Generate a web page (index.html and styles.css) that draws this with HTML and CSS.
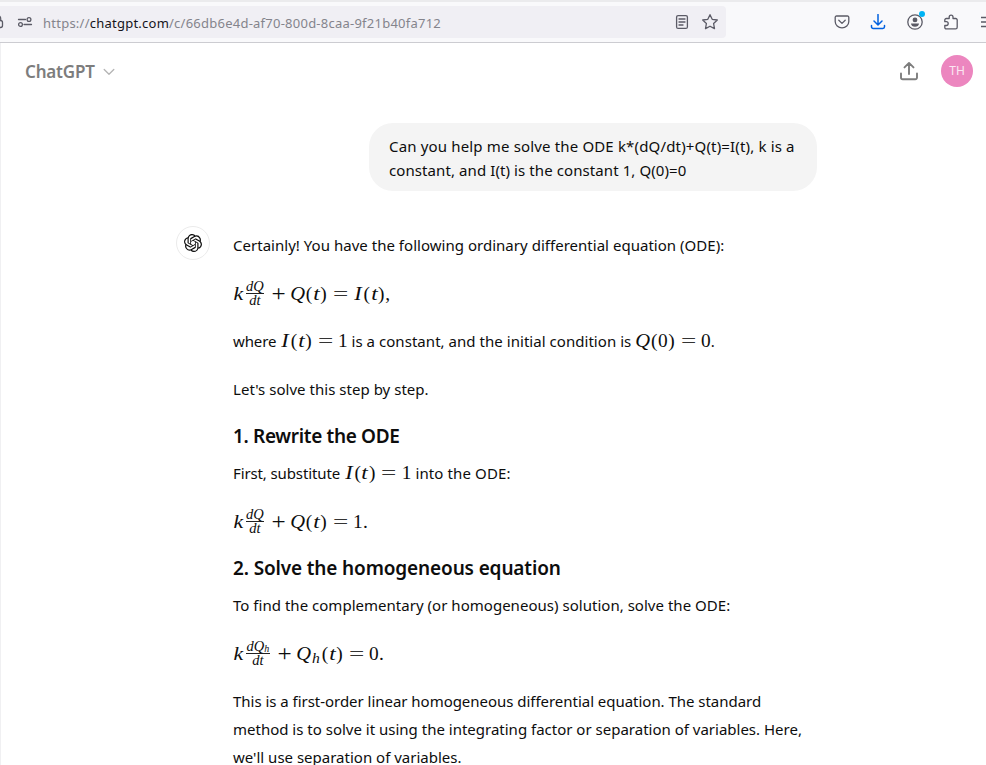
FILE: index.html
```
<!DOCTYPE html>
<html lang="en">
<head>
<meta charset="utf-8">
<title>ChatGPT</title>
<link rel="stylesheet" href="styles.css">
</head>
<body>
<div class="toolbar">
  <div class="urlbar">
    <svg class="lock" width="4" height="16" viewBox="0 0 4 16"><path d="M0 6.500h.500a2 2 0 0 1 2 2v3a2 2 0 0 1-2 2H0M0 2.500c.6.500.8 1.500.8 4" /></svg>
    <svg class="perms" width="16" height="16" viewBox="0 0 16 16"><path d="M1.500 5.500h7M7 10.500h7.500"/><circle cx="12" cy="5.500" r="1.900"/><circle cx="3.500" cy="10.500" r="1.900"/></svg>
    <div class="url">https://<b>chatgpt.com</b>/c/66db6e4d-af70-800d-8caa-9f21b40fa712</div>
    <svg class="reader" width="16" height="16" viewBox="0 0 16 16"><rect x="2.600" y="1.600" width="10.800" height="12.800" rx="1.500"/><path d="M5 5h6M5 8h6M5 11h4"/></svg>
    <svg class="star" width="18" height="18" viewBox="0 0 18 18"><path d="M9 1.700l2.200 4.600 5.100.7-3.700 3.500.9 5.100L9 13.200l-4.500 2.400.9-5.100L1.700 7l5.100-.7z"/></svg>
  </div>
  <div class="tools">
    <svg width="16" height="16" viewBox="0 0 16 16"><path d="M2.500 2h11a1.300 1.300 0 0 1 1.300 1.300V7.500a6.800 6.300 0 0 1-13.600 0V3.300A1.300 1.300 0 0 1 2.500 2zM4.800 6.300L8 9.400l3.200-3.100"/></svg>
    <svg class="download" width="16" height="16" viewBox="0 0 16 16"><path d="M8 .500v10.300M4 7l4 4 4-4M1.500 11.500v1.300a1.700 1.700 0 0 0 1.700 1.700h9.600a1.700 1.700 0 0 0 1.700-1.700v-1.300"/></svg>
    <span class="account"><svg width="16" height="16" viewBox="0 0 16 16"><circle cx="8" cy="8" r="7.200"/><circle class="solid" cx="8" cy="5.900" r="2.400"/><path class="solid" d="M4 9.500h8c0 2-1.800 3.300-4 3.300S4 11.500 4 9.500z"/></svg><i class="dot"></i></span>
    <svg width="16" height="16" viewBox="0 0 16 16"><path d="M3.200 14.900H12.600a1.600 1.600 0 0 0 1.600-1.600V6a1.500 1.500 0 0 0-1.500-1.500H10V3.100a1.900 1.900 0 0 0-3.800 0v1.400H3.300A1.500 1.500 0 0 0 1.800 6v1.700h1.500a1.900 1.900 0 0 1 0 3.800H1.800v2a1.400 1.400 0 0 0 1.400 1.400z"/></svg>
    <svg class="menu" width="6" height="16" viewBox="0 0 6 16"><path d="M0 3.500h6M0 8h6M0 12.500h6"/></svg>
  </div>
</div>
<div class="page">
  <header class="header">
    <div class="model"><span>ChatGPT</span>
      <svg width="12" height="8" viewBox="0 0 12 8"><path d="M1.200 1.500L6 6.300l4.800-4.800"/></svg>
    </div>
    <div class="actions">
      <svg width="20" height="20" viewBox="0 0 20 20"><path d="M10 13V2.200M5.500 6.400L10 1.900l4.500 4.500M2 12.500v4a1.800 1.800 0 0 0 1.800 1.800h12.400a1.800 1.800 0 0 0 1.800-1.800v-4"/></svg>
      <div class="avatar">TH</div>
    </div>
  </header>
  <main class="thread">
    <div class="bubble"><span class="u1">Can you help me solve the ODE k*(dQ/dt)+Q(t)=I(t), k is a</span><br><span class="u2">constant, and I(t) is the constant 1, Q(0)=0</span></div>
    <div class="reply">
      <div class="logo"><svg width="18" height="18" viewBox="0 0 24 24"><path d="M22.2819 9.8211a5.9847 5.9847 0 0 0-.5157-4.9108 6.0462 6.0462 0 0 0-6.5098-2.9A6.0651 6.0651 0 0 0 4.9807 4.1818a5.9847 5.9847 0 0 0-3.9977 2.9 6.0462 6.0462 0 0 0 .7427 7.0966 5.98 5.98 0 0 0 .511 4.9107 6.051 6.051 0 0 0 6.5146 2.9001A5.9847 5.9847 0 0 0 13.2599 24a6.0557 6.0557 0 0 0 5.7718-4.2058 5.9894 5.9894 0 0 0 3.9977-2.9001 6.0557 6.0557 0 0 0-.7475-7.0729zm-9.022 12.6081a4.4755 4.4755 0 0 1-2.8764-1.0408l.1419-.0804 4.7783-2.7582a.7948.7948 0 0 0 .3927-.6813v-6.7369l2.02 1.1686a.071.071 0 0 1 .038.052v5.5826a4.504 4.504 0 0 1-4.4945 4.4944zm-9.6607-4.1254a4.4708 4.4708 0 0 1-.5346-3.0137l.142.0852 4.783 2.7582a.7712.7712 0 0 0 .7806 0l5.8428-3.3685v2.3324a.0804.0804 0 0 1-.0332.0615L9.74 19.9502a4.4992 4.4992 0 0 1-6.1408-1.6464zM2.3408 7.8956a4.485 4.485 0 0 1 2.3655-1.9728V11.6a.7664.7664 0 0 0 .3879.6765l5.8144 3.3543-2.0201 1.1685a.0757.0757 0 0 1-.071 0l-4.8303-2.7865A4.504 4.504 0 0 1 2.3408 7.872zm16.5963 3.8558L13.1038 8.364 15.1192 7.2a.0757.0757 0 0 1 .071 0l4.8303 2.7913a4.4944 4.4944 0 0 1-.6765 8.1042v-5.6772a.79.79 0 0 0-.407-.667zm2.0107-3.0231l-.142-.0852-4.7735-2.7818a.7759.7759 0 0 0-.7854 0L9.409 9.2297V6.8974a.0662.0662 0 0 1 .0284-.0615l4.8303-2.7866a4.4992 4.4992 0 0 1 6.6802 4.66zM8.3065 12.863l-2.02-1.1638a.0804.0804 0 0 1-.038-.0567V6.0742a4.4992 4.4992 0 0 1 7.3757-3.4537l-.142.0805L8.704 5.459a.7948.7948 0 0 0-.3927.6813zm1.0976-2.3654l2.602-1.4998 2.6069 1.4998v2.9994l-2.5974 1.4997-2.6067-1.4997Z"/></svg></div>
      <div class="answer">
        <p class="a1">Certainly! You have the following ordinary differential equation (ODE):</p>
        <p class="eq"><span class="math"><i class="k">k</i><span class="frac"><span><i>dQ</i></span><span><i>dt</i></span></span><s class="bin">+</s><i class="Q">Q</i><s class="par">(</s><i class="t">t</i><s class="par">)</s><s class="rel">=</s><i class="I">I</i><s class="par">(</s><i class="t">t</i><s class="par">)</s><s class="pt">,</s></span></p>
        <p><span class="a2">where </span><span class="math"><i class="I">I</i><s class="par">(</s><i class="t">t</i><s class="par">)</s><s class="rel">=</s><s class="n">1</s></span><span class="a3"> is a constant, and the initial condition is </span><span class="math"><i class="Q">Q</i><s class="par">(</s><s class="n">0</s><s class="par">)</s><s class="rel">=</s><s class="n">0</s></span>.</p>
        <p class="a4">Let's solve this step by step.</p>
        <h3 class="h1">1. Rewrite the ODE</h3>
        <p><span class="a5">First, substitute </span><span class="math"><i class="I">I</i><s class="par">(</s><i class="t">t</i><s class="par">)</s><s class="rel">=</s><s class="n">1</s></span><span class="a6"> into the ODE:</span></p>
        <p class="eq"><span class="math"><i class="k">k</i><span class="frac"><span><i>dQ</i></span><span><i>dt</i></span></span><s class="bin">+</s><i class="Q">Q</i><s class="par">(</s><i class="t">t</i><s class="par">)</s><s class="rel">=</s><s class="n">1</s><s class="pt">.</s></span></p>
        <h3 class="h2">2. Solve the homogeneous equation</h3>
        <p class="a7">To find the complementary (or homogeneous) solution, solve the ODE:</p>
        <p class="eq"><span class="math"><i class="k">k</i><span class="frac wide"><span><i>dQ</i><i class="tiny">h</i></span><span><i>dt</i></span></span><s class="bin">+</s><i class="Q">Q</i><i class="sub">h</i><s class="par">(</s><i class="t">t</i><s class="par">)</s><s class="rel">=</s><s class="n">0</s><s class="pt">.</s></span></p>
        <p><span class="b1">This is a first-order linear homogeneous differential equation. The standard</span><br><span class="b2">method is to solve it using the integrating factor or separation of variables. Here,</span><br><span class="b3">we'll use separation of variables.</span></p>
      </div>
    </div>
  </main>
</div>
</body>
</html>
```
FILE: styles.css
```
* { box-sizing: border-box; }
body {
  margin: 0;
  height: 765px;
  overflow: hidden;
  background: #fff;
  color: #0d0d0d;
  font: 15px/28px "Noto Sans", "Open Sans", sans-serif;
}
svg { display: block; flex: none; fill: none; stroke: #5b5b66; stroke-width: 1.3; stroke-linecap: round; stroke-linejoin: round; }

/* Browser toolbar */
.toolbar {
  display: flex;
  align-items: center;
  height: 43px;
  padding-top: 2px;
  border-top: 2px solid #ebebed;
  border-bottom: 1px solid #ccccd1;
  background: #f9f9fb;
}
.urlbar {
  display: flex;
  align-items: center;
  flex: none;
  width: 726px;
  height: 32px;
  margin-bottom: 2px;
  background: #f0eff4;
  border-radius: 0 4px 4px 0;
}
.perms { margin-left: 13px; }
.url { width: 631px; margin: 2px 0 0 10px; font-size: 13px; color: #84848c; white-space: nowrap; letter-spacing: .24px; }
.url b { font-weight: 400; color: #15141a; }
.star { margin-left: 11px; }
.tools { display: flex; flex: none; align-items: center; gap: 20px; margin: 0 0 2px 108px; }
.tools .download { stroke: #0061e0; stroke-width: 1.5; margin-right: 1px; }
.tools .menu { margin-left: 2px; }
.account { position: relative; }
.account .solid { fill: #5b5b66; stroke: none; }
.dot { position: absolute; top: -3px; right: -2px; width: 6px; height: 6px; border-radius: 50%; background: #00b3f4; }

/* Page */
.page { height: 722px; border-left: 1px solid #f0f0f2; overflow: hidden; }
.header { display: flex; justify-content: space-between; align-items: center; height: 56px; padding: 0 13px 0 24px; }
.model { display: flex; align-items: center; gap: 8px; font-size: 17px; font-weight: 600; letter-spacing: -.2px; color: #7d7d7d; }
.model span { margin-top: 1px; }
.model svg { stroke: #b4b4b4; margin-top: 2px; }
.actions { display: flex; align-items: center; gap: 22px; }
.actions svg { stroke: #7d7d7d; stroke-width: 1.9; }
.avatar { width: 32px; height: 32px; border-radius: 50%; background: #ec86bf; color: #fbe6f2; font-size: 12px; line-height: 32px; text-align: center; }

.bubble {
  width: 448px;
  height: 68px;
  margin: 24px 0 0 368px;
  padding: 11px 20px 9px;
  border-radius: 24px;
  background: #f4f4f4;
  line-height: 24px;
  white-space: nowrap;
}
.u1 { letter-spacing: .16px; }
.u2 { letter-spacing: .09px; }
.reply { display: flex; gap: 24px; margin: 35px 0 0 175px; }
.logo { display: flex; align-items: center; justify-content: center; width: 34px; height: 34px; border: 1px solid #ebebeb; border-radius: 50%; flex: none; }
.logo svg { fill: #0d0d0d; stroke: none; }
.answer { width: 600px; margin-left: -1px; padding-top: 5px; white-space: nowrap; }
p { min-height: 28px; margin: 0 0 20px; }
p:has(+ h3) { margin-bottom: 17px; }
h3 { margin: 0 0 7px; font-size: 19px; line-height: 32px; font-weight: 600; }
span { white-space: pre; }
.a1, .a7 { letter-spacing: .025px; }
.a4 { letter-spacing: .03px; }
.a2, .a5 { letter-spacing: -.12px; }
.a3 { letter-spacing: .04px; }
.a6 { letter-spacing: .12px; }
.b1 { letter-spacing: -.03px; }
.h1 { letter-spacing: -.33px; }
.h2 { letter-spacing: -.14px; }

/* Formulas: token advances in em */
.math { display: inline-flex; align-items: baseline; height: 28px; vertical-align: baseline; font-family: "Liberation Serif", serif; font-size: 19.36px; line-height: 28px; }
.math s { text-decoration: none; }
.math > s, .math > i { display: block; text-align: center; }
.math > .k { width: .55em; transform: scaleX(1.12); }
.math > .Q { width: .79em; transform: scaleX(1.06); }
.math > .t { width: .361em; transform: scaleX(1.2); }
.math > .I { width: .52em; transform: scaleX(1.15); }
.par { width: .389em; }
.n { width: .5em; }
.pt { width: .278em; }
.math > .sub { width: .72em; font-size: 14px; position: relative; top: 3px; transform: scaleX(1.12); }
.bin { width: .778em; margin: 0 .222em; transform: scale(1.3, 1.15); }
.rel { width: .778em; margin: 0 .278em; transform: scaleX(1.4); color: #333; }
.eq { height: 28px; padding-top: 1px; }
.frac { display: grid; grid-template-rows: 14px 13px; width: 18px; height: 27px; margin: -1px 2.3px 0; align-self: center; font-size: 14.500px; line-height: 13px; text-align: center; }
.frac > span { display: block; }
.frac > span:first-child { border-bottom: 1px solid #222; line-height: 12px; }
.frac.wide { width: 24px; }
.tiny { font-size: 10px; line-height: 1; position: relative; top: 1px; }
```
